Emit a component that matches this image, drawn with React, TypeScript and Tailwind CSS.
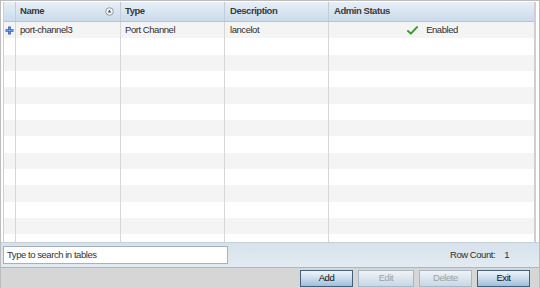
import React from "react";

const rows = Array.from({ length: 14 });

function PlusIcon() {
  return (
    <svg width="9" height="9" viewBox="0 0 9 9">
      <path d="M3.2 0.5h2.6v2.7h2.7v2.6H5.8v2.7H3.2V5.8H0.5V3.2h2.7z" fill="#2858b4" />
      <path d="M4.1 1.4h0.8v2.7h2.7v0.8H4.9v2.7H4.1V4.9H1.4V4.1h2.7z" fill="#7aa3e6" />
    </svg>
  );
}

function SortIcon() {
  return (
    <svg width="9" height="9" viewBox="0 0 9 9">
      <circle cx="4.5" cy="4.5" r="3.8" fill="#f4f7fa" stroke="#8a8f96" strokeWidth="0.9" />
      <path d="M4.5 2.6L6.3 5.4H2.7z" fill="#555" />
    </svg>
  );
}

function Check() {
  return (
    <svg width="11" height="9" viewBox="0 0 12 10">
      <path d="M1 5.5L4.2 8.5L11 1.2" fill="none" stroke="#3a9b2e" strokeWidth="2.2" strokeLinecap="round" strokeLinejoin="round" />
    </svg>
  );
}

const cellBorder = "border-r border-[#d6d6d6]";

export default function App() {
  const font = { fontFamily: '"Liberation Sans", Arial, sans-serif' };
  return (
    <div
      className="w-[540px] h-[288px] flex flex-col bg-white border-t border-l border-r border-[#bcbcbc] overflow-hidden text-[9.5px] tracking-[-0.45px] text-[#2e2e2e]"
      style={font}
    >
      {/* table area */}
      <div className="h-[241px] pl-[2px] pr-[3px] pt-[1px] flex flex-col bg-white">
        <div className="flex-1 flex flex-col border-l border-r-2 border-[#cfcfcf] overflow-hidden">
          {/* header */}
          <div className="h-[20px] shrink-0 flex bg-gradient-to-b from-[#e8eff7] to-[#cadbeb] border-b border-[#b7c5d2] font-bold text-[#3a3a3a]">
            <div className="w-[12px] border-r border-[#c3cdd6]" />
            <div className="w-[105px] border-r border-[#c3cdd6] flex items-center pl-[4px] pr-[6px] justify-between">
              <span>Name</span>
              <SortIcon />
            </div>
            <div className="w-[104px] border-r border-[#c3cdd6] flex items-center pl-[4px]">Type</div>
            <div className="w-[104px] border-r border-[#c3cdd6] flex items-center pl-[5px]">Description</div>
            <div className="flex-1 flex items-center pl-[5px]">Admin Status</div>
          </div>
          {/* body */}
          <div className="flex-1 flex flex-col overflow-hidden">
            {rows.map((_, i) => (
              <div
                key={i}
                className={`h-[16.33px] shrink-0 flex ${i % 2 === 0 ? "bg-[#f4f4f4]" : "bg-white"}`}
              >
                <div className={`w-[12px] ${cellBorder} flex items-center justify-center`}>
                  {i === 0 && <PlusIcon />}
                </div>
                <div className={`w-[105px] ${cellBorder} flex items-center pl-[4px]`}>
                  {i === 0 && "port-channel3"}
                </div>
                <div className={`w-[104px] ${cellBorder} flex items-center pl-[4px]`}>
                  {i === 0 && "Port Channel"}
                </div>
                <div className={`w-[104px] ${cellBorder} flex items-center pl-[5px]`}>
                  {i === 0 && "lancelot"}
                </div>
                <div className="flex-1 flex items-center justify-center gap-[8px] pl-[2px]">
                  {i === 0 && (
                    <>
                      <Check />
                      <span>Enabled</span>
                    </>
                  )}
                </div>
              </div>
            ))}
          </div>
        </div>
      </div>
      {/* toolbar */}
      <div className="h-[25px] shrink-0 flex items-center justify-between bg-gradient-to-b from-[#d7e2ec] to-[#e3ebf2] border-t border-[#c5cfd8] pl-[2px] pr-[30px]">
        <div className="w-[225px] h-[18px] bg-white border border-[#a6b1bc] flex items-center pl-[3px] text-[#333]">
          Type to search in tables
        </div>
        <div className="flex items-center gap-[9px]">
          <span>Row Count:</span>
          <span>1</span>
        </div>
      </div>
      {/* bottom bar */}
      <div className="flex-1 flex items-center justify-end gap-[5px] pr-[9px] bg-[#d6d6d6] border-t border-[#b4b4b4]">
        <button className="w-[53px] h-[17px] border border-[#465f78] bg-gradient-to-b from-[#eef5fb] via-[#c9dced] to-[#9fbfdb] text-[#111]">
          Add
        </button>
        <button className="w-[56px] h-[17px] border border-[#a7b7c5] bg-gradient-to-b from-[#eef3f7] to-[#c8d8e4] text-[#9aa2aa]">
          Edit
        </button>
        <button className="w-[53px] h-[17px] border border-[#a7b7c5] bg-gradient-to-b from-[#eef3f7] to-[#c8d8e4] text-[#9aa2aa]">
          Delete
        </button>
        <button className="w-[53px] h-[17px] border border-[#465f78] bg-gradient-to-b from-[#eef5fb] via-[#c9dced] to-[#9fbfdb] text-[#111]">
          Exit
        </button>
      </div>
    </div>
  );
}
